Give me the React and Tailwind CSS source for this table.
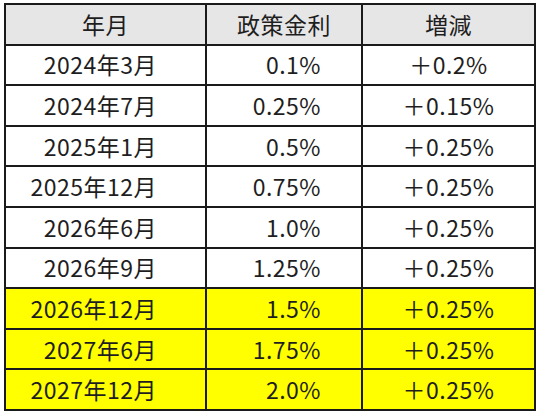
export default function App() {
  const rows = [
    ["2024年3月", "0.1%", "＋0.2%", false],
    ["2024年7月", "0.25%", "＋0.15%", false],
    ["2025年1月", "0.5%", "＋0.25%", false],
    ["2025年12月", "0.75%", "＋0.25%", false],
    ["2026年6月", "1.0%", "＋0.25%", false],
    ["2026年9月", "1.25%", "＋0.25%", false],
    ["2026年12月", "1.5%", "＋0.25%", true],
    ["2027年6月", "1.75%", "＋0.25%", true],
    ["2027年12月", "2.0%", "＋0.25%", true],
  ];
  return (
    <div className="w-[540px] h-[415px] bg-white pt-[3px] pl-[4px]" style={{ fontFamily: '"Noto Sans CJK JP", "Noto Sans", sans-serif' }}>
      <div className="w-[532px] h-[408px] bg-[#1a1a1a] p-[2px] grid grid-cols-[199px_154px_171px] grid-rows-[repeat(10,1fr)] gap-[2px] text-[23px] tracking-[0.5px] text-[#1e1e1e] leading-none">
        <div className="bg-[#e7e6e6] flex items-center justify-center">年月</div>
        <div className="bg-[#e7e6e6] flex items-center justify-center">政策金利</div>
        <div className="bg-[#e7e6e6] flex items-center justify-center">増減</div>
        {rows.map(([a, b, c, y]) => (
          <>
            <div key={a + "a"} className={`${y ? "bg-[#ffff00]" : "bg-white"} flex items-center justify-end pr-[48px]`}>{a}</div>
            <div key={a + "b"} className={`${y ? "bg-[#ffff00]" : "bg-white"} flex items-center justify-end pr-[40px]`}>{b}</div>
            <div key={a + "c"} className={`${y ? "bg-[#ffff00]" : "bg-white"} flex items-center justify-center`}>{c}</div>
          </>
        ))}
      </div>
    </div>
  );
}
